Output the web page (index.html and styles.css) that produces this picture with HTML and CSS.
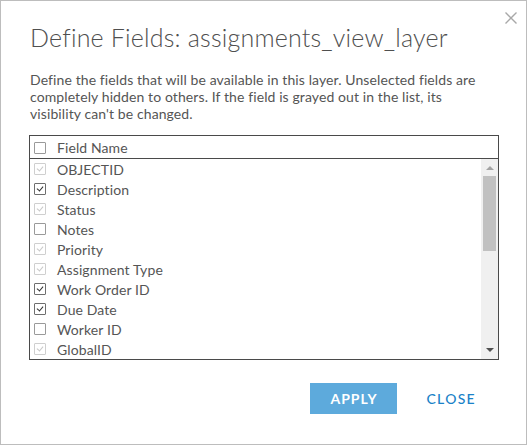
FILE: index.html
```html
<!DOCTYPE html>
<html>
<head>
<meta charset="utf-8">
<link rel="stylesheet" href="styles.css">
</head>
<body>
<div class="dialog">
  <button class="close-x" aria-label="Close">
    <svg width="12" height="12" viewBox="0 0 12 12"><path d="M0.5 0.5 L11.5 11.5 M11.5 0.5 L0.5 11.5" stroke="#a8a8a8" stroke-width="1.4" fill="none"/></svg>
  </button>
  <h1 class="title">Define Fields: assignments_view_layer</h1>
  <p class="desc">Define the fields that will be available in this layer. Unselected fields are completely hidden to others. If the field is grayed out in the list, its visibility can't be changed.</p>
  <div class="table">
    <div class="thead">
      <span class="cb"></span><span class="label">Field Name</span>
    </div>
    <div class="tbody">
      <div class="rows">
        <div class="row"><span class="cb dis"></span><span class="label">OBJECTID</span></div>
        <div class="row"><span class="cb on"></span><span class="label">Description</span></div>
        <div class="row"><span class="cb dis"></span><span class="label">Status</span></div>
        <div class="row"><span class="cb"></span><span class="label">Notes</span></div>
        <div class="row"><span class="cb dis"></span><span class="label">Priority</span></div>
        <div class="row"><span class="cb dis"></span><span class="label">Assignment Type</span></div>
        <div class="row"><span class="cb on"></span><span class="label">Work Order ID</span></div>
        <div class="row"><span class="cb on"></span><span class="label">Due Date</span></div>
        <div class="row"><span class="cb"></span><span class="label">Worker ID</span></div>
        <div class="row"><span class="cb dis"></span><span class="label">GlobalID</span></div>
      </div>
      <div class="scrollbar">
        <span class="arrow up"></span>
        <span class="thumb"></span>
        <span class="spacer"></span>
        <span class="arrow down"></span>
      </div>
    </div>
  </div>
  <div class="actions">
    <button class="btn apply">APPLY</button>
    <button class="btn close">CLOSE</button>
  </div>
</div>
</body>
</html>
```
FILE: styles.css
```css
* { box-sizing: border-box; }
html, body { margin: 0; padding: 0; background: #fff; }
body { font-family: Lato, "Open Sans", sans-serif; color: #4c4c4c; }

.dialog {
  position: relative;
  width: 527px;
  height: 445px;
  border: 1px solid #bdbdbd;
  padding: 0 28px 0 28px;
  display: flex;
  flex-direction: column;
}

.close-x {
  position: absolute;
  top: 10px;
  right: 8px;
  width: 14px;
  height: 14px;
  padding: 1px;
  border: 0;
  background: none;
  display: flex;
}

.title {
  margin: 19px 0 0 1px;
  font-weight: 300;
  font-size: 25px;
  line-height: 34px;
  color: #4f4f4f;
  letter-spacing: 0.2px;
}

.desc {
  margin: 17px 0 0 1px;
  width: 452px;
  font-size: 14px;
  line-height: 17px;
  color: #555;
  font-weight: 400;
  letter-spacing: 0.1px;
}

.table {
  margin-top: 13px;
  width: 470px;
  border: 1px solid #4a4a4a;
  font-size: 14px;
}

.thead {
  height: 23px;
  border-bottom: 1px solid #4a4a4a;
  display: flex;
  align-items: center;
  padding-left: 4px;
  padding-top: 1px;
}

.tbody {
  display: flex;
  height: 200px;
}

.rows { flex: 1; display: flex; flex-direction: column; }

.row {
  height: 20px;
  display: flex;
  align-items: center;
  padding-left: 4px;
}

.label { margin-left: 11px; color: #555; letter-spacing: 0.1px; }

.cb {
  width: 12px;
  height: 12px;
  border: 1px solid #9a9a9a;
  border-radius: 1px;
  background: #fff;
  flex: none;
  position: relative;
}
.cb.on { border-color: #6e6e6e; }
.cb.dis { border-color: #cfcfcf; }
.cb.on::after, .cb.dis::after {
  content: "";
  position: absolute;
  left: 3px;
  top: 1px;
  width: 3px;
  height: 5px;
  border-right: 1.5px solid #333;
  border-bottom: 1.5px solid #333;
  transform: rotate(40deg);
}
.cb.dis::after { border-color: #c8c8c8; border-width: 0 1px 1px 0; }

.scrollbar {
  width: 17px;
  background: #f0f0f0;
  display: flex;
  flex-direction: column;
  align-items: center;
}
.arrow { width: 0; height: 0; border-left: 4px solid transparent; border-right: 4px solid transparent; flex: none; }
.arrow.up { border-bottom: 4px solid #a3a3a3; margin-top: 7px; }
.arrow.down { border-top: 4px solid #505050; margin-bottom: 7px; }
.thumb { width: 13px; height: 75px; background: #c1c1c1; margin-top: 6px; flex: none; }
.spacer { flex: 1; }

.actions {
  display: flex;
  justify-content: flex-end;
  align-items: center;
  gap: 8px;
  margin-top: 23px;
  padding-right: 1px;
}
.btn {
  font-family: Lato, sans-serif;
  font-size: 14px;
  font-weight: 700;
  letter-spacing: 1px;
  border: 0;
  height: 31px;
  cursor: pointer;
}
.apply {
  width: 87px;
  background: #5daadc;
  color: #fff;
}
.close {
  background: none;
  color: #1a82c8;
  font-weight: 500;
  letter-spacing: 1.3px;
  padding: 0 21px;
}
```
